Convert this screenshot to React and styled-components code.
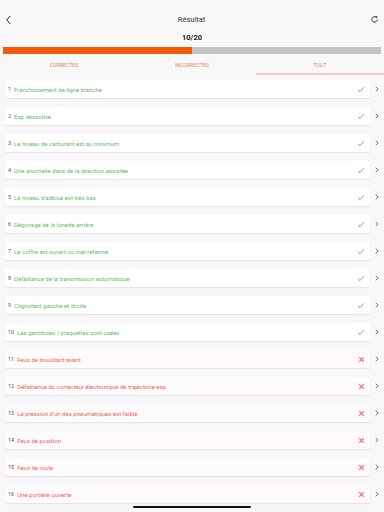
import React from "react";
import styled, { createGlobalStyle } from "styled-components";

const GlobalStyle = createGlobalStyle`
  html, body {
    margin: 0;
    padding: 0;
    background: #f8f8f8;
    overflow: hidden;
  }
  * { box-sizing: border-box; }
`;

const TOTAL = 20;

const questions = [
  { label: "Franchissement de ligne blanche", ok: true },
  { label: "Esp désactivé", ok: true },
  { label: "Le niveau de carburant est au minimum", ok: true },
  { label: "Une anomalie dans de la direction assistée", ok: true },
  { label: "Le niveau d'adblue est très bas", ok: true },
  { label: "Dégivrage de la lunette arrière", ok: true },
  { label: "Le coffre est ouvert ou mal refermé.", ok: true },
  { label: "Défaillance de la transmission automatique", ok: true },
  { label: "Clignotant gauche et droite", ok: true },
  { label: "Les garnitures / plaquettes sont usées", ok: true },
  { label: "Feux de brouillard avant", ok: false },
  { label: "Défaillance du correcteur électronique de trajectoire esp", ok: false },
  { label: "La pression d'un des pneumatiques est faible", ok: false },
  { label: "Feux de position", ok: false },
  { label: "Feux de route", ok: false },
  { label: "Une portière ouverte", ok: false },
];

function CheckIcon() {
  return (
    <svg width="8" height="7" viewBox="0 0 8 7">
      <path d="M1.2 3.9 L3 5.6 L6.8 1.4" fill="none" stroke="#5fb95f" strokeWidth="1" />
    </svg>
  );
}

function CrossIcon() {
  return (
    <svg width="7" height="7" viewBox="0 0 7 7">
      <path d="M1.2 1.2 L5.8 5.8 M5.8 1.2 L1.2 5.8" fill="none" stroke="#f26460" strokeWidth="1.1" />
    </svg>
  );
}

function Chevron({ dir = "right", size = 6, color = "#555" }) {
  const d = dir === "right" ? "M2 1 L5 4 L2 7" : "M6 1 L2 5.5 L6 10";
  const vb = dir === "right" ? "0 0 7 8" : "0 0 8 11";
  return (
    <svg width={size} height={dir === "right" ? size : size * 1.4} viewBox={vb}>
      <path d={d} fill="none" stroke={color} strokeWidth="1.1" />
    </svg>
  );
}

function RefreshIcon() {
  return (
    <svg width="9" height="9" viewBox="0 0 10 10">
      <path d="M8 5 A3 3 0 1 1 6.6 2.4" fill="none" stroke="#333" strokeWidth="1.1" />
      <path d="M5.6 1 L8.4 1.6 L7.2 4 Z" fill="#333" />
    </svg>
  );
}

export default function App() {
  const correct = questions.filter((q) => q.ok).length;
  return (
    <>
      <GlobalStyle />
      <Page>
        <StatusBar>
          <span>09:41 Mon 13 Sep</span>
          <Dots>•••</Dots>
          <span>100%</span>
        </StatusBar>
        <Header>
          <IconButton>
            <Chevron dir="left" size={7} color="#111" />
          </IconButton>
          <Title>Résultat</Title>
          <IconButton>
            <RefreshIcon />
          </IconButton>
        </Header>
        <Score>
          {correct}/{TOTAL}
        </Score>
        <Progress>
          <Fill style={{ width: `${(correct / TOTAL) * 100}%` }} />
        </Progress>
        <Tabs>
          <Tab>CORRECTES</Tab>
          <Tab>INCORRECTES</Tab>
          <Tab active>TOUT</Tab>
        </Tabs>
        <List>
          {questions.map((q, i) => (
            <Row key={i}>
              <Card ok={q.ok}>
                <Num>{i + 1}</Num>
                <Label ok={q.ok}>{q.label}</Label>
                <Status>{q.ok ? <CheckIcon /> : <CrossIcon />}</Status>
              </Card>
              <Arrow>
                <Chevron />
              </Arrow>
            </Row>
          ))}
        </List>
        <HomeBar />
      </Page>
    </>
  );
}

const Page = styled.div`
  width: 384px;
  height: 512px;
  position: relative;
  overflow: hidden;
  background: #f8f8f8;
  font-family: Roboto, "Liberation Sans", sans-serif;
`;

const StatusBar = styled.div`
  height: 10px;
  padding: 0 12px;
  display: flex;
  align-items: center;
  justify-content: space-between;
  font-size: 5px;
  color: #ffffff;
`;

const Dots = styled.span`
  letter-spacing: 1px;
`;

const Header = styled.div`
  height: 19px;
  padding: 0 4px 0 3px;
  display: flex;
  align-items: center;
  justify-content: space-between;
`;

const IconButton = styled.div`
  width: 10px;
  display: flex;
  align-items: center;
  justify-content: center;
`;

const Title = styled.div`
  font-size: 7.5px;
  color: #333;
`;

const Score = styled.div`
  height: 17px;
  display: flex;
  align-items: center;
  justify-content: center;
  font-size: 7.5px;
  font-weight: 700;
  color: #222;
`;

const Progress = styled.div`
  margin: 1px 3px 0;
  height: 7px;
  background: #c4c4c4;
`;

const Fill = styled.div`
  height: 100%;
  background: #f25a08;
`;

const Tabs = styled.div`
  display: grid;
  grid-template-columns: repeat(3, 1fr);
  height: 21px;
`;

const Tab = styled.div`
  display: flex;
  align-items: center;
  justify-content: center;
  padding-top: 3px;
  font-size: 5px;
  letter-spacing: 0.1px;
  color: #f27c62;
  border-bottom: 2px solid ${(p) => (p.active ? "#fcc9c0" : "transparent")};
`;

const List = styled.div`
  padding-top: 5px;
  display: flex;
  flex-direction: column;
  gap: 9px;
`;

const Row = styled.div`
  display: flex;
  align-items: center;
  padding-left: 5px;
`;

const Card = styled.div`
  width: 365px;
  height: 18px;
  display: flex;
  align-items: center;
  padding: 0 5px 0 3px;
  border-radius: 2px;
  background: ${(p) => (p.ok ? "#ffffff" : "#fffbfd")};
  box-shadow: 0 1px 1.5px rgba(0, 0, 0, 0.09);
`;

const Num = styled.span`
  font-size: 5.5px;
  color: #555;
  margin-right: 3px;
`;

const Label = styled.span`
  flex: 1;
  font-size: 6px;
  color: ${(p) => (p.ok ? "#6abb6a" : "#f0625c")};
`;

const Status = styled.span`
  display: flex;
  align-items: center;
`;

const Arrow = styled.div`
  flex: 1;
  display: flex;
  justify-content: center;
  align-items: center;
`;

const HomeBar = styled.div`
  position: absolute;
  left: 133px;
  bottom: 4px;
  width: 118px;
  height: 2px;
  border-radius: 1px;
  background: #111;
`;
